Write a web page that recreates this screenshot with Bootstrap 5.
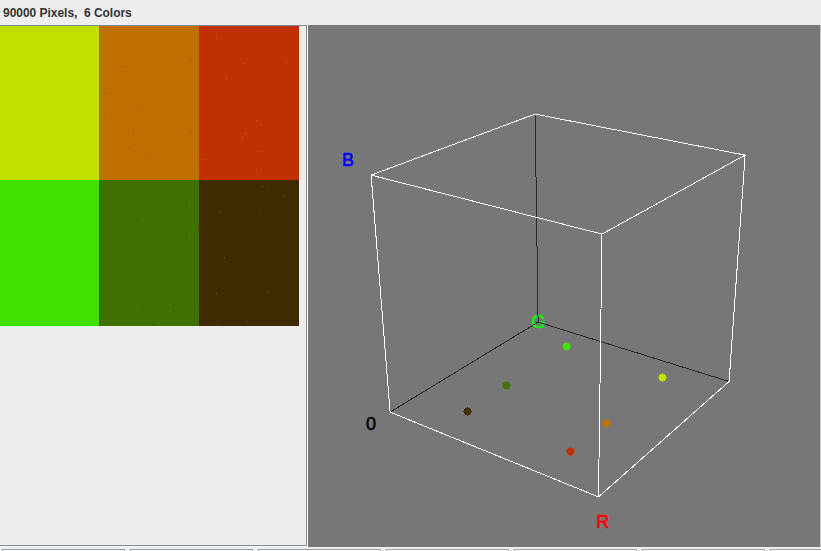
<!DOCTYPE html>
<html lang="en">
<head>
<meta charset="utf-8">
<title>Color Inspector 3D</title>
<link href="https://cdn.jsdelivr.net/npm/bootstrap@5.3.0/dist/css/bootstrap.min.css" rel="stylesheet">
<style>
body{background:#eee;font-family:"Liberation Sans",Arial,sans-serif}
.info{height:25px;padding:5px 0 0 3px;font-size:12px;font-weight:700;line-height:16px;letter-spacing:-.03px;color:#333;white-space:pre}
.work{height:522px}
.image-pane{width:308px;height:522px;border-right:1px solid #fff;border-bottom:1px solid #fff}
.image-frame{height:521px;border:solid #7a8a99;border-width:1px 1px 1px 0}
.cube-pane{width:512px;height:522px;background:#777}
.edge-strip{background:#c4c4c4}
.fields{height:4px;padding:2px 0 0 2px;gap:5px;overflow:hidden}
.field-box{width:123px;height:20px;background:#fff;border:1px solid #a0a0a0;border-bottom:0;box-shadow:1px 0 #fff}
svg{display:block}
</style>
<script src="https://cdn.jsdelivr.net/npm/bootstrap@5.3.0/dist/js/bootstrap.bundle.min.js"></script>
</head>
<body class="m-0 overflow-hidden vh-100 d-flex flex-column">
<header class="info flex-shrink-0">90000 Pixels,  6 Colors</header>
<main class="work d-flex flex-shrink-0">
<section class="image-pane flex-shrink-0">
<div class="image-frame">
<svg width="299" height="300" viewBox="0 26 299 300" shape-rendering="crispEdges">
<path fill="#c0e000" d="M0 26h99v154H0z"/><path fill="#c07000" d="M99 26h100v154H99z"/><path fill="#c03000" d="M199 26h100v154H199z"/>
<path fill="#40e000" d="M0 180h99v146H0z"/><path fill="#407000" d="M99 180h100v146H99z"/><path fill="#3e2c00" d="M199 180h100v146H199z"/>
<path fill="#b82e00" d="M127 67h1v1h-1zM189 59h1v1h-1zM104 92h1v1h-1zM141 106h1v1h-1zM109 118h1v1h-1zM128 135h1v1h-1zM189 132h1v1h-1zM133 151h1v1h-1zM149 154h1v1h-1z"/>
<path fill="#b87010" d="M216 37h1v1h-1zM244 63h1v1h-1zM286 62h1v1h-1zM226 78h1v1h-1zM256 120h1v1h-1zM245 133h1v1h-1zM242 137h1v1h-1zM262 151h1v1h-1zM201 159h1v1h-1zM256 169h1v1h-1zM199 174h1v1h-1zM206 179h1v1h-1z"/>
<path fill="#402800" d="M186 206h1v1h-1zM137 220h1v1h-1zM197 226h1v1h-1zM118 240h1v1h-1zM164 240h1v1h-1zM186 238h1v1h-1zM141 307h1v1h-1zM173 311h1v1h-1zM194 311h1v1h-1zM153 324h1v1h-1z"/>
<path fill="#406c10" d="M262 186h1v1h-1zM267 190h1v1h-1zM284 195h1v1h-1zM259 209h1v1h-1zM220 212h1v1h-1zM224 257h1v1h-1zM267 291h1v1h-1zM216 293h1v1h-1zM247 322h1v1h-1zM217 324h1v1h-1z"/>
</svg>
</div>
</section>
<section class="cube-pane flex-shrink-0">
<svg width="512" height="522" viewBox="308 25 512 522">
<defs><path id="dot" d="M-1.5 -3.5h1v-1h1v1h2v1h1v2h1v1h-1v2h-1v1h-2v1h-1v-1h-2v-1h-1v-2h-1v-1h1v-2h1v-1z"/></defs>
<g font-family="Liberation Sans, Arial, sans-serif" font-size="18" stroke-width=".55">
<text x="341.9" y="166" fill="#00f" stroke="#00f">B</text>
<text x="366" y="430" fill="#000" stroke="#000">0</text>
<text x="531.4" y="328" fill="#0f0" stroke="#0f0">G</text>
<text x="596.3" y="528" fill="#f00" stroke="#f00">R</text>
</g>
<g fill="none" shape-rendering="crispEdges">
<path stroke="#2b2b2b" d="M535.1 114.1L538.1 322.1L390.1 412.1M538.1 322.1L729.1 381.5"/>
<path stroke="#fff" d="M371.1 175.1L535.1 114.1L745.1 155.1L602 234.1ZL390.1 412.1L598.5 496.9L729.1 381.5L745.1 155.1M602 234.1L598.5 496.9"/>
</g>
<g shape-rendering="crispEdges">
<use href="#dot" x="566.5" y="346.5" fill="#40e000"/><use href="#dot" x="662.5" y="377.5" fill="#c0e000"/>
<use href="#dot" x="506.5" y="385.5" fill="#407000"/><use href="#dot" x="467.5" y="411.5" fill="#403000"/>
<use href="#dot" x="606.5" y="423.5" fill="#c07000"/><use href="#dot" x="570.5" y="451.5" fill="#c03000"/>
</g>
</svg>
</section>
<div class="edge-strip flex-fill"></div>
</main>
<footer class="fields d-flex flex-shrink-0">
<div class="field-box flex-shrink-0"></div><div class="field-box flex-shrink-0"></div><div class="field-box flex-shrink-0"></div><div class="field-box flex-shrink-0"></div><div class="field-box flex-shrink-0"></div><div class="field-box flex-shrink-0"></div><div class="field-box flex-shrink-0"></div>
</footer>
</body>
</html>
